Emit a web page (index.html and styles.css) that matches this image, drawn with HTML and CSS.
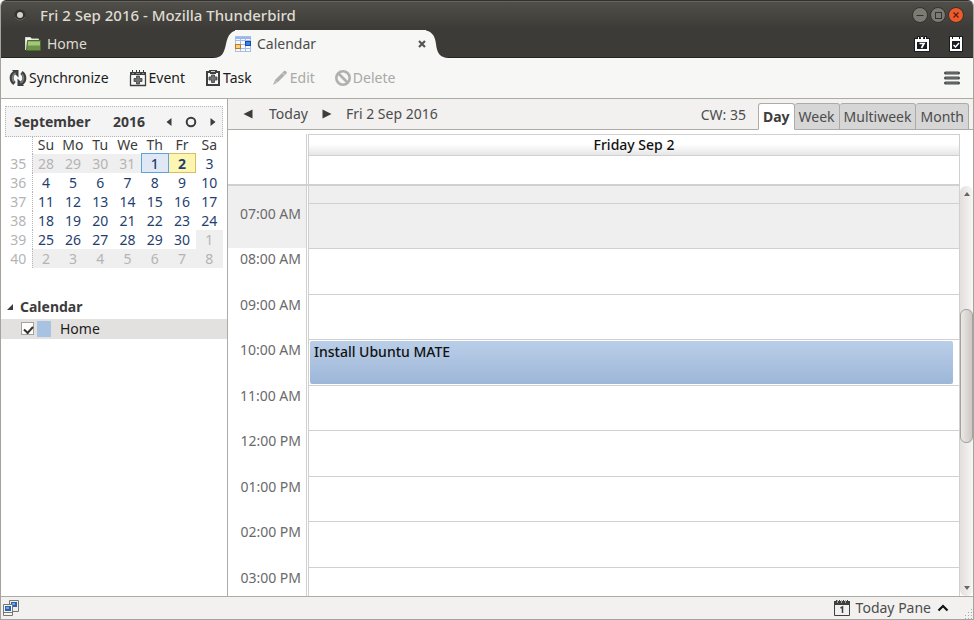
FILE: index.html
```html
<!DOCTYPE html>
<html lang="en">
<head>
<meta charset="utf-8">
<title>Fri 2 Sep 2016 - Mozilla Thunderbird</title>
<link rel="stylesheet" href="styles.css">
</head>
<body>
<div class="window">
  <header class="chrome">
    <div class="titlebar">
      <svg class="menu-dot" width="14" height="14" viewBox="0 0 14 14"><circle cx="7" cy="7" r="5.5" fill="#34332f"/><path d="M2 9a5.5 5.5 0 0 0 10 0" fill="none" stroke="#66645d"/><circle cx="7" cy="7" r="3" fill="#d6d2ca"/></svg>
      <h1 class="title">Fri 2 Sep 2016 - Mozilla Thunderbird</h1>
      <div class="window-buttons">
        <button class="wm" aria-label="Minimize"><svg width="16" height="16" viewBox="0 0 16 16"><circle cx="8" cy="8" r="7.5" fill="#7c7a72" stroke="#33322e"/><path d="M4.500 8.500h7" stroke="#33322e"/></svg></button>
        <button class="wm" aria-label="Maximize"><svg width="16" height="16" viewBox="0 0 16 16"><circle cx="8" cy="8" r="7.500" fill="#7c7a72" stroke="#33322e"/><rect x="5.500" y="5.500" width="6" height="6" fill="none" stroke="#33322e"/></svg></button>
        <button class="wm" aria-label="Close"><svg width="16" height="16" viewBox="0 0 16 16"><circle cx="8" cy="8" r="7.500" fill="#ee5a2c" stroke="#33322e"/><path d="M5.500 5.500l5 5M10.500 5.500l-5 5" stroke="#542312" stroke-width="1.300"/></svg></button>
      </div>
    </div>
    <div class="tabstrip">
      <button class="tab">
        <svg width="16" height="16" viewBox="0 0 16 16"><path d="M.5 14V1.500h5l1 1.500h7v3" fill="#f4f4f0" stroke="#d8d8d2"/><path d="M1.500 14.500l1-10h13v10z" fill="#6d9447" stroke="#496b2c"/><path d="M3 5.500h12v4H3z" fill="#a3c77c"/></svg>
        Home
      </button>
      <div class="tab-active">
        <svg class="curve" width="27" height="28" viewBox="0 0 27 28"><path d="M0 28C9 28 11 23 13 14C15 5 18 0 27 0V28z" fill="#f7f7f5"/></svg>
        <button class="tab tab-current">
          <svg width="16" height="16" viewBox="0 0 16 16"><rect x=".5" y=".5" width="15" height="15" fill="#f4f8ff" stroke="#a8bfe6"/><path d="M1 1h15v2H1z" fill="#9ab6e6"/><path d="M5.500 1v15M10.500 1v15M1 8.500h15M1 12.500h15M1 4.500h15" stroke="#a3bde8"/><rect x="10.500" y="5.500" width="5" height="4" fill="#3f7ff0" stroke="#164a9e"/><rect x=".5" y="8.500" width="5" height="4" fill="#ffd177" stroke="#c4781c"/></svg>
          Calendar
        </button>
        <button class="tab-close" aria-label="Close tab"><svg width="8" height="8" viewBox="0 0 8 8"><path d="M1 1l6 6M7 1L1 7" stroke="#555" stroke-width="2.200"/></svg></button>
        <svg class="curve" width="27" height="28" viewBox="0 0 27 28"><path d="M27 28C18 28 15 23 14 14C13 5 9 0 0 0V28z" fill="#f7f7f5"/></svg>
      </div>
      <div class="tab-tools">
        <button class="icon-button" aria-label="Open calendar"><svg width="16" height="16" viewBox="0 0 16 16"><path d="M1 2h2V0h3v2h1V0h2v2h1V0h3v2h3v14H0V2z" fill="#191c20"/><path d="M1 3h3V1h1v2h2V1h2v2h2V1h1v2h3v12H1z" fill="#fff"/><path d="M3 6h10v7H3z" fill="#191c20"/><path d="M5.500 7.500H10L7.500 12" fill="none" stroke="#fff" stroke-width="1.700"/></svg></button>
        <button class="icon-button" aria-label="Open tasks"><svg width="14" height="16" viewBox="0 0 14 16"><path d="M0 0h14v16H0z" fill="#191c20"/><path d="M1 1h2v2h8V1h2v14H1z" fill="#fff"/><path d="M4 1h6v3H4z" fill="#fff"/><path d="M3 5h8v8H3z" fill="#191c20"/><path d="M4.500 9l2 2 3.500-4" fill="none" stroke="#fff" stroke-width="1.500"/></svg></button>
      </div>
    </div>
  </header>

  <nav class="toolbar">
    <button class="tool"><svg width="18" height="18" viewBox="0 0 18 18"><path d="M5.500 14.500C1.500 11.500 1.500 5.500 6 3.500" fill="none" stroke="#3d3f40" stroke-width="3.800"/><path d="M3 1h6.500v7.500L7 6z" fill="#3d3f40"/><path d="M12.500 3.500c4 3 4 9-.5 11" fill="none" stroke="#3d3f40" stroke-width="3.800"/><path d="M15 17H8.500V9.500L11 12z" fill="#3d3f40"/><path d="M5 13C2.500 10 3 6 6.500 4M13 5c2.500 3 2 7-1.500 9" fill="none" stroke="#7b7f80" stroke-width="1.500"/></svg>Synchronize</button>
    <button class="tool"><svg width="18" height="18" viewBox="0 0 18 18"><path d="M1.500 6v10.500h15V6" fill="#f7f7f5" stroke="#3d3f40" stroke-width="1.300"/><path d="M1 3h16v3H1zM3 1h1v2H3zM7 1h1v2H7zM10 1h1v2h-1zM14 1h1v2h-1z" fill="#3d3f40"/><path d="M3 4.500h2M7 4.500h4M13 4.500h2" stroke="#8b8d8d"/><path d="M7.500 7h3v2.500H13v3h-2.500V15h-3v-2.500H5v-3h2.500z" fill="#707374" stroke="#3d3f40" stroke-width=".8"/></svg>Event</button>
    <button class="tool"><svg width="16" height="18" viewBox="0 0 16 18"><path d="M1 2h3V1h8v1h3v15H1z" fill="#3d3f40"/><path d="M3 4h10v11H3z" fill="#f7f7f5"/><path d="M5 2h6v3H5z" fill="#3d3f40"/><path d="M6 2h4v1H6z" fill="#c9caca"/><path d="M6.500 6h3v2H12v3H9.500v2.500h-3V11H4V8h2.500z" fill="#707374" stroke="#3d3f40" stroke-width=".8"/></svg>Task</button>
    <button class="tool" disabled><svg width="16" height="18" viewBox="0 0 16 18"><path d="M1 16l2-5 9-9q2-1 3 2l-9 9z" fill="#b0b0ae"/><path d="M3.500 12l2 2M10.500 4l2.500 2.500" stroke="#e0e0de"/></svg>Edit</button>
    <button class="tool" disabled><svg width="16" height="18" viewBox="0 0 16 18"><circle cx="8" cy="9" r="6.700" fill="none" stroke="#b0b0ae" stroke-width="2.600"/><path d="M3.500 4.500l9 9" stroke="#b0b0ae" stroke-width="2.600"/></svg>Delete</button>
    <button class="icon-button app-menu" aria-label="Menu"><svg width="16" height="14" viewBox="0 0 16 14"><path d="M1.500 2h13M1.500 7h13M1.500 12h13" stroke="#4a4d4e" stroke-width="3" stroke-linecap="round"/><path d="M2 2h12M2 7h12M2 12h12" stroke="#777a7b"/></svg></button>
  </nav>

  <main class="workspace">
    <aside class="sidebar">
      <div class="month-bar">
        <span class="month-name">September</span>
        <span class="month-year">2016</span>
        <button class="icon-button" aria-label="Previous month"><svg width="6" height="8" viewBox="0 0 6 8"><path d="M5.500 0v8L.5 4z" fill="#3c3c3c"/></svg></button>
        <button class="icon-button" aria-label="Go to today"><svg width="12" height="12" viewBox="0 0 12 12"><circle cx="6" cy="6" r="4.300" fill="none" stroke="#3c3c3c" stroke-width="2"/></svg></button>
        <button class="icon-button" aria-label="Next month"><svg width="6" height="8" viewBox="0 0 6 8"><path d="M.5 0v8l5-4z" fill="#3c3c3c"/></svg></button>
      </div>
      <table class="minimonth">
        <thead><tr><th class="week"></th><th>Su</th><th>Mo</th><th>Tu</th><th>We</th><th>Th</th><th>Fr</th><th>Sa</th></tr></thead>
        <tbody>
          <tr><th class="week">35</th><td class="other">28</td><td class="other">29</td><td class="other">30</td><td class="other">31</td><td class="today">1</td><td class="selected">2</td><td>3</td></tr>
          <tr><th class="week">36</th><td>4</td><td>5</td><td>6</td><td>7</td><td>8</td><td>9</td><td>10</td></tr>
          <tr><th class="week">37</th><td>11</td><td>12</td><td>13</td><td>14</td><td>15</td><td>16</td><td>17</td></tr>
          <tr><th class="week">38</th><td>18</td><td>19</td><td>20</td><td>21</td><td>22</td><td>23</td><td>24</td></tr>
          <tr><th class="week">39</th><td>25</td><td>26</td><td>27</td><td>28</td><td>29</td><td>30</td><td class="other">1</td></tr>
          <tr><th class="week">40</th><td class="other">2</td><td class="other">3</td><td class="other">4</td><td class="other">5</td><td class="other">6</td><td class="other">7</td><td class="other">8</td></tr>
        </tbody>
      </table>
      <h2 class="list-title"><svg width="8" height="8" viewBox="0 0 8 8"><path d="M7 1v6H1z" fill="#3c3c3c"/></svg>Calendar</h2>
      <label class="calendar-item"><input type="checkbox" checked><span class="swatch"></span>Home</label>
    </aside>

    <section class="view">
      <div class="viewbar">
        <button class="icon-button" aria-label="Previous day"><svg width="10" height="10" viewBox="0 0 10 10"><path d="M9.500.5v9L.5 5z" fill="#3c3c3c"/></svg></button>
        <button class="today-button">Today</button>
        <button class="icon-button" aria-label="Next day"><svg width="10" height="10" viewBox="0 0 10 10"><path d="M.5.5v9l9-4.500z" fill="#3c3c3c"/></svg></button>
        <span class="date">Fri 2 Sep 2016</span>
        <span class="week-number">CW: 35</span>
        <div class="view-tabs">
          <button class="view-tab current">Day</button>
          <button class="view-tab">Week</button>
          <button class="view-tab">Multiweek</button>
          <button class="view-tab">Month</button>
        </div>
      </div>
      <div class="day-head">
        <div class="head-gutter"></div>
        <div class="head-day"><h2 class="day-name">Friday Sep 2</h2></div>
      </div>
      <div class="scroll-area">
        <div class="hours">
          <div class="hour off partial"><span class="time"></span><div class="slot"></div></div>
          <div class="hour off"><span class="time">07:00 AM</span><div class="slot"></div></div>
          <div class="hour"><span class="time">08:00 AM</span><div class="slot"></div></div>
          <div class="hour"><span class="time">09:00 AM</span><div class="slot"></div></div>
          <div class="hour"><span class="time">10:00 AM</span><div class="slot"><div class="event">Install Ubuntu MATE</div></div></div>
          <div class="hour"><span class="time">11:00 AM</span><div class="slot"></div></div>
          <div class="hour"><span class="time">12:00 PM</span><div class="slot"></div></div>
          <div class="hour"><span class="time">01:00 PM</span><div class="slot"></div></div>
          <div class="hour"><span class="time">02:00 PM</span><div class="slot"></div></div>
          <div class="hour"><span class="time">03:00 PM</span><div class="slot"></div></div>
        </div>
        <div class="scrollbar">
          <svg width="6" height="4" viewBox="0 0 6 4"><path d="M0 4h6L3 0z" fill="#666"/></svg>
          <div class="track"><div class="before"></div><div class="thumb"></div><div class="after"></div></div>
          <svg width="6" height="4" viewBox="0 0 6 4"><path d="M0 0h6L3 4z" fill="#666"/></svg>
        </div>
      </div>
    </section>
  </main>

  <footer class="statusbar">
    <svg width="16" height="16" viewBox="0 0 16 16"><path d="M6.500.5h9v11h-9z" fill="#eee" stroke="#77776f"/><path d="M8 2h6v5H8z" fill="#2f5fb3"/><path d="M9 3h3v2H9z" fill="#79a1e6"/><path d="M.5 4.500h9v11h-9z" fill="#f6f6f4" stroke="#77776f"/><path d="M0 12.500h10" stroke="#77776f"/><path d="M2 6h6v5H2z" fill="#2f5fb3"/><path d="M3 7h3v2H3z" fill="#79a1e6"/></svg>
    <button class="pane-button">
      <svg width="16" height="18" viewBox="0 0 16 18"><path d="M.5 5v11.500h15V5" fill="#f2f1f0" stroke="#3d3f40"/><path d="M0 2h16v4H0zM2 1h1v1H2zM5 1h1v1H5zM9 1h1v1H9zM13 1h1v1h-1z" fill="#3d3f40"/><path d="M3.500 1v3M7.500 1v3M11.500 1v3" stroke="#a5a6a6"/><path d="M6.500 9l2-1v6" fill="none" stroke="#3d3f40" stroke-width="1.500"/></svg>
      Today Pane
      <svg class="chevron" width="12" height="8" viewBox="0 0 12 8"><path d="M1.500 6.500L6 2l4.500 4.500" fill="none" stroke="#111" stroke-width="2.200"/></svg>
    </button>
    <svg class="grip" width="10" height="11" viewBox="0 0 10 11"><path d="M8.500 1v10M5.500 4v7M2.500 7v4" stroke="#aaa7a2" stroke-dasharray="1 2"/></svg>
  </footer>
</div>
</body>
</html>
```

FILE: styles.css
```css
* { box-sizing: border-box; }

body {
  margin: 0;
  background: #fff;
  color: #3c3c3c;
  font: 14px/20px "Noto Sans", "Open Sans", sans-serif;
}

button {
  display: flex;
  align-items: center;
  margin: 0;
  padding: 0;
  border: 0;
  background: none;
  color: inherit;
  font: inherit;
}

h1, h2 { margin: 0; font-size: 14px; }
svg { display: block; flex: none; }

.window {
  display: flex;
  flex-direction: column;
  height: 100vh;
  overflow: hidden;
  border: solid #a6a39e;
  border-width: 0 1px 1px;
  border-radius: 6px 6px 0 0;
}

/* Title bar and tabs */
.chrome {
  margin: 0 -1px;
  border-top: 1px solid #33322e;
  background: linear-gradient(#504f49, #3c3b37 28px);
  box-shadow: inset 0 1px #66645e, inset 0 -1px #252421;
  color: #dfdbd2;
}

.titlebar {
  display: flex;
  align-items: center;
  height: 29px;
  padding: 0 10px 2px 13px;
}

.title { margin-left: 13px; font-size: 15px; font-weight: 500; }
.window-buttons { display: flex; gap: 2px; margin-left: auto; }

.tabstrip { display: flex; height: 28px; }
.tab { gap: 6px; width: 189px; padding-left: 25px; }
.tab-active { display: flex; width: 236px; margin-left: 24px; }
.tab-active .tab-current { flex: 1; width: auto; margin-left: -5px; padding-left: 0; }
.tab-current, .tab-close { background: #f7f7f5; color: #4c4c4c; }
/* The close button reaches over the start of the curved edge. */
.tab-close { position: relative; z-index: 1; margin-right: -4px; }
.tab-tools { display: flex; align-items: center; gap: 19px; margin-left: auto; padding-right: 11px; }

/* Toolbar */
.toolbar {
  display: flex;
  flex: none;
  align-items: center;
  gap: 20px;
  height: 41px;
  padding: 0 13px 0 8px;
  border-bottom: 1px solid #aeaba6;
  background: #f7f7f5;
  color: #1c1c1c;
}
.tool { gap: 2px; }
.tool:disabled { color: #a9a9a7; }
.app-menu { margin-left: auto; }

.workspace { display: flex; flex: 1; min-height: 0; }

/* Sidebar */
.sidebar {
  flex: none;
  width: 227px;
  padding-top: 7px;
  border-right: 1px solid #aeaba6;
}
.month-bar {
  display: flex;
  align-items: center;
  gap: 13px;
  height: 31px;
  margin: 0 4px;
  padding: 0 6px 0 8px;
  border: 1px dotted #b4b4b4;
  background: #f4f4f4;
  font-weight: 700;
}
.month-name { flex: 1; }
.month-year { margin-right: 8px; }

.minimonth {
  width: 218px;
  margin: 0 4px;
  border-collapse: collapse;
  table-layout: fixed;
  text-align: center;
}
.minimonth th, .minimonth td { height: 19px; padding: 0; line-height: 17px; }
.minimonth thead th { height: 16px; line-height: 16px; }
.minimonth th { font-weight: 400; }
.minimonth td { color: #1f3f70; }
.minimonth .week { width: 27px; border-right: 1px dotted #b4b4b4; color: #b4b4b4; }
.minimonth .other { background: #efefef; color: #b4b4b4; }
.minimonth .today { border: 1px solid #5fa3dc; background: #dfe8f4; font-weight: 500; }
.minimonth .selected { border: 1px solid #d8bd62; background: #fdf6b0; font-weight: 700; }

.list-title { display: flex; align-items: center; gap: 6px; margin: 29px 0 2px 5px; }
.calendar-item {
  display: flex;
  align-items: center;
  height: 20px;
  padding-left: 20px;
  background: #e3e1e0;
  color: #1c1c1c;
}
.calendar-item input {
  appearance: none;
  width: 13px;
  height: 13px;
  margin: 0 3px 0 0;
  border: 1px solid #a5a29e;
  background: #fff;
}
.calendar-item input:checked::before {
  content: "";
  display: block;
  width: 7px;
  height: 4px;
  margin: 3px 2px;
  border: solid #333;
  border-width: 0 0 2px 2px;
  transform: rotate(-48deg);
}
.swatch { width: 14px; height: 16px; margin-right: 9px; background: #a8c2e1; }

/* Day view */
.view { display: flex; flex: 1; flex-direction: column; min-width: 0; }
.viewbar {
  display: flex;
  flex: none;
  align-items: center;
  height: 31px;
  padding: 0 4px 0 15px;
  border-bottom: 1px solid #aeaba6;
  background: #f2f1f0;
  color: #4c4c4c;
}
.today-button { margin: 0 14px 0 16px; }
.date { margin-left: 14px; }
.week-number { margin: 2px 12px 0 auto; }
.view-tabs { display: flex; align-self: flex-end; margin-bottom: -1px; }
.view-tab {
  height: 27px;
  padding: 0 4px;
  border: 1px solid #aeaba6;
  border-left-width: 0;
  border-radius: 3px 3px 0 0;
  background: #d6d6d6;
}
.view-tab.current {
  border-left-width: 1px;
  border-bottom-color: #fff;
  background: #fff;
  color: #3c3c3c;
  font-weight: 700;
}

.day-head {
  display: grid;
  flex: none;
  grid-template-columns: 79px 1fr;
  column-gap: 1px;
  height: 56px;
  margin-right: 13px;
  padding-top: 4px;
  border-bottom: 2px solid #d0d0d0;
}
.head-gutter { border-right: 1px solid #d0d0d0; }
.head-day { border: solid #d0d0d0; border-width: 1px 1px 0; }
.day-name {
  height: 21px;
  border-bottom: 1px solid #d0d0d0;
  background: linear-gradient(#fff 45%, #e6e6e6);
  color: #111;
  font-weight: 500;
  text-align: center;
}

.scroll-area { display: flex; flex: 1; min-height: 0; }
.hours { flex: 1; overflow: hidden; }
.hour { display: grid; grid-template-columns: 79px 1fr; column-gap: 1px; height: 46px; }
.hour:nth-child(even) { height: 45px; }
.hour.partial { height: 17px; }
.time { padding: 1px 5px 0 0; border-right: 1px solid #d0d0d0; color: #6a6a6a; text-align: right; }
.slot { padding: 1px 6px 1px 1px; border: solid #d0d0d0; border-width: 1px 1px 0; }
.partial .slot { border-top: 0; }
.off .time, .off .slot { background: #efefef; }
.event {
  height: 100%;
  padding: 1px 0 0 4px;
  border-radius: 2px;
  background: linear-gradient(#bacee8, #9db7d8);
  color: #111;
  font-weight: 500;
}

.scrollbar {
  display: flex;
  flex: none;
  flex-direction: column;
  align-items: center;
  width: 13px;
  padding: 6px 0;
  border-radius: 6px;
  background: linear-gradient(90deg, #e2e0de, #f7f6f5);
}
.track { display: flex; flex: 1; flex-direction: column; width: 13px; }
.before { flex: 114; }
.thumb {
  flex: 132;
  border: 1px solid #a5a19c;
  border-radius: 6px;
  background: linear-gradient(90deg, #ebe9e7, #cbc7c3);
}
.after { flex: 144; }

/* Status bar */
.statusbar {
  display: flex;
  flex: none;
  align-items: center;
  height: 23px;
  padding-left: 2px;
  border-top: 1px solid #aeaba6;
  background: #f2f1f0;
}
.pane-button { gap: 6px; margin-left: auto; color: #4c4c4c; }
.grip { align-self: flex-end; margin-left: 14px; }
```
